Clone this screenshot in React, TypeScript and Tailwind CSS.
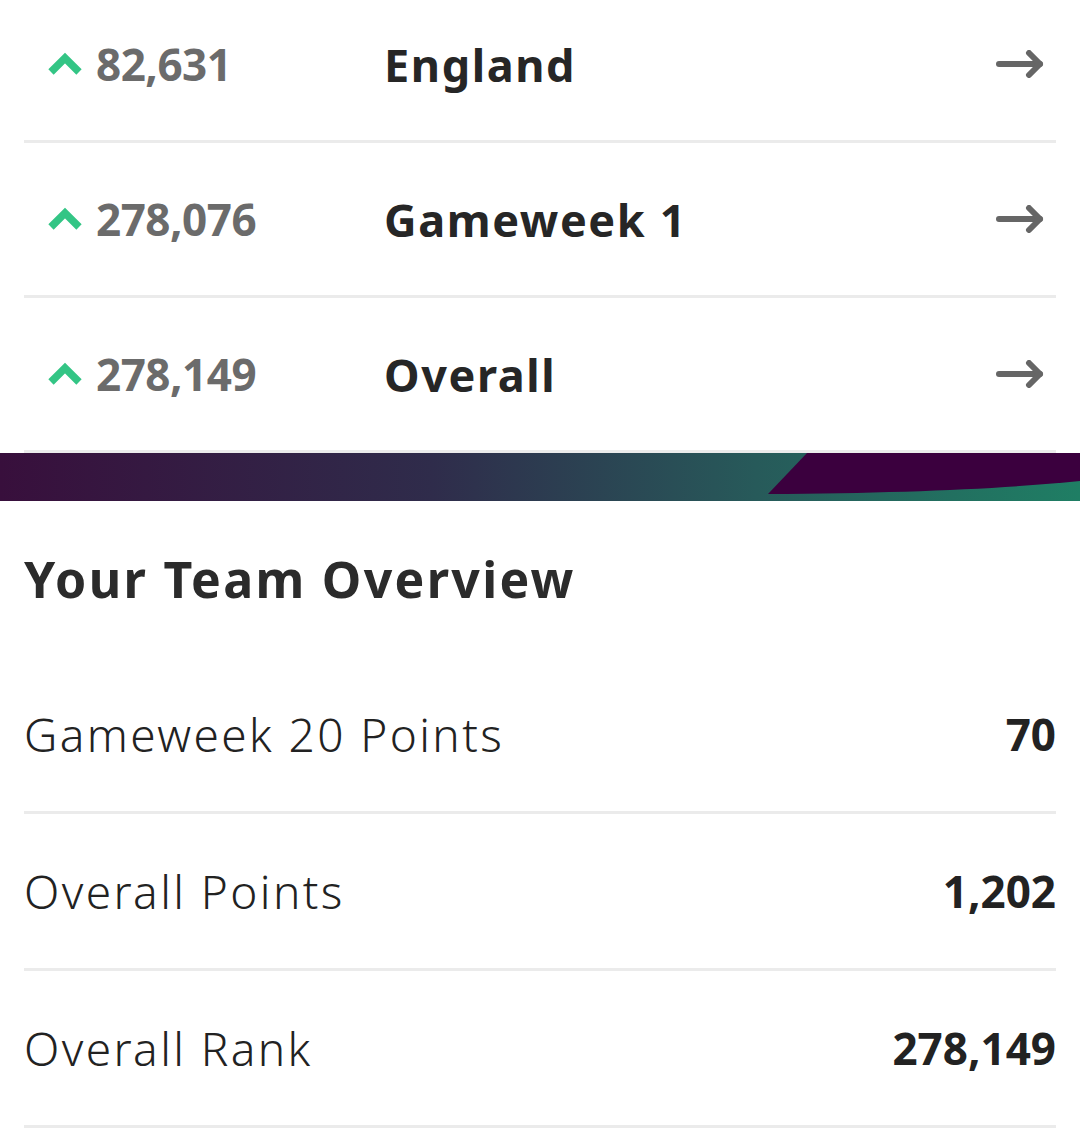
import React from "react";

const font = { fontFamily: '"Noto Sans", "Liberation Sans", sans-serif' };

function Chevron() {
  return (
    <svg width="34" height="24" viewBox="0 0 34 24" className="shrink-0">
      <polyline points="3,20 17,6 31,20" fill="none" stroke="#33c585" strokeWidth="7.5" />
    </svg>
  );
}

function Arrow() {
  return (
    <svg width="48" height="28" viewBox="0 0 48 28" className="shrink-0">
      <line x1="3" y1="14" x2="44" y2="14" stroke="#666666" strokeWidth="6" strokeLinecap="round" />
      <polyline points="33,3 44,14 33,25" fill="none" stroke="#666666" strokeWidth="6" strokeLinecap="round" strokeLinejoin="round" />
    </svg>
  );
}

function RankRow({ rank, name }: { rank: string; name: string }) {
  return (
    <div className="flex h-[155px] items-center border-b-[3px] border-[#ebebeb]">
      <div className="flex w-[360px] items-center gap-[14px] pl-[24px]">
        <Chevron />
        <span className="text-[44px] font-bold leading-none text-[#6b6b6b] tracking-[-0.5px]">{rank}</span>
      </div>
      <span className="flex-1 text-[45px] font-bold leading-none text-[#262626] tracking-[1.6px]">{name}</span>
      <div className="pr-[12px]">
        <Arrow />
      </div>
    </div>
  );
}

function Banner() {
  return (
    <svg width="1080" height="48" viewBox="0 0 1080 48" className="block">
      <defs>
        <linearGradient id="bg" x1="0" y1="0" x2="1" y2="0">
          <stop offset="0" stopColor="#380f3c" />
          <stop offset="0.4" stopColor="#2f2c4b" />
          <stop offset="0.7" stopColor="#275a5a" />
          <stop offset="1" stopColor="#1f7e64" />
        </linearGradient>
      </defs>
      <rect x="0" y="0" width="1080" height="48" fill="url(#bg)" />
      <path d="M807 0 L1080 0 L1080 28 C1000 36 900 40 768 41 Z" fill="#3b003e" />
    </svg>
  );
}

function StatRow({ label, value }: { label: string; value: string }) {
  return (
    <div className="flex h-[157px] items-center justify-between border-b-[3px] border-[#ebebeb]">
      <span className="text-[46px] font-light leading-none text-[#222222] tracking-[2.4px]">{label}</span>
      <span className="text-[44px] font-bold leading-none text-[#222222]">{value}</span>
    </div>
  );
}

export default function App() {
  return (
    <div className="w-[1080px] h-[1134px] overflow-hidden bg-white" style={font}>
      <div className="-mt-[12px] px-[24px]">
        <div className="-mx-[24px] px-[24px]">
          <RankRow rank="82,631" name="England" />
          <RankRow rank="278,076" name="Gameweek 1" />
          <RankRow rank="278,149" name="Overall" />
        </div>
      </div>
      <Banner />
      <div className="px-[24px]">
        <div className="flex h-[156px] items-center">
          <h2 className="text-[50px] font-bold leading-none text-[#2b2b2b] tracking-[2.3px]">Your Team Overview</h2>
        </div>
        <StatRow label="Gameweek 20 Points" value="70" />
        <StatRow label="Overall Points" value="1,202" />
        <StatRow label="Overall Rank" value="278,149" />
      </div>
    </div>
  );
}
